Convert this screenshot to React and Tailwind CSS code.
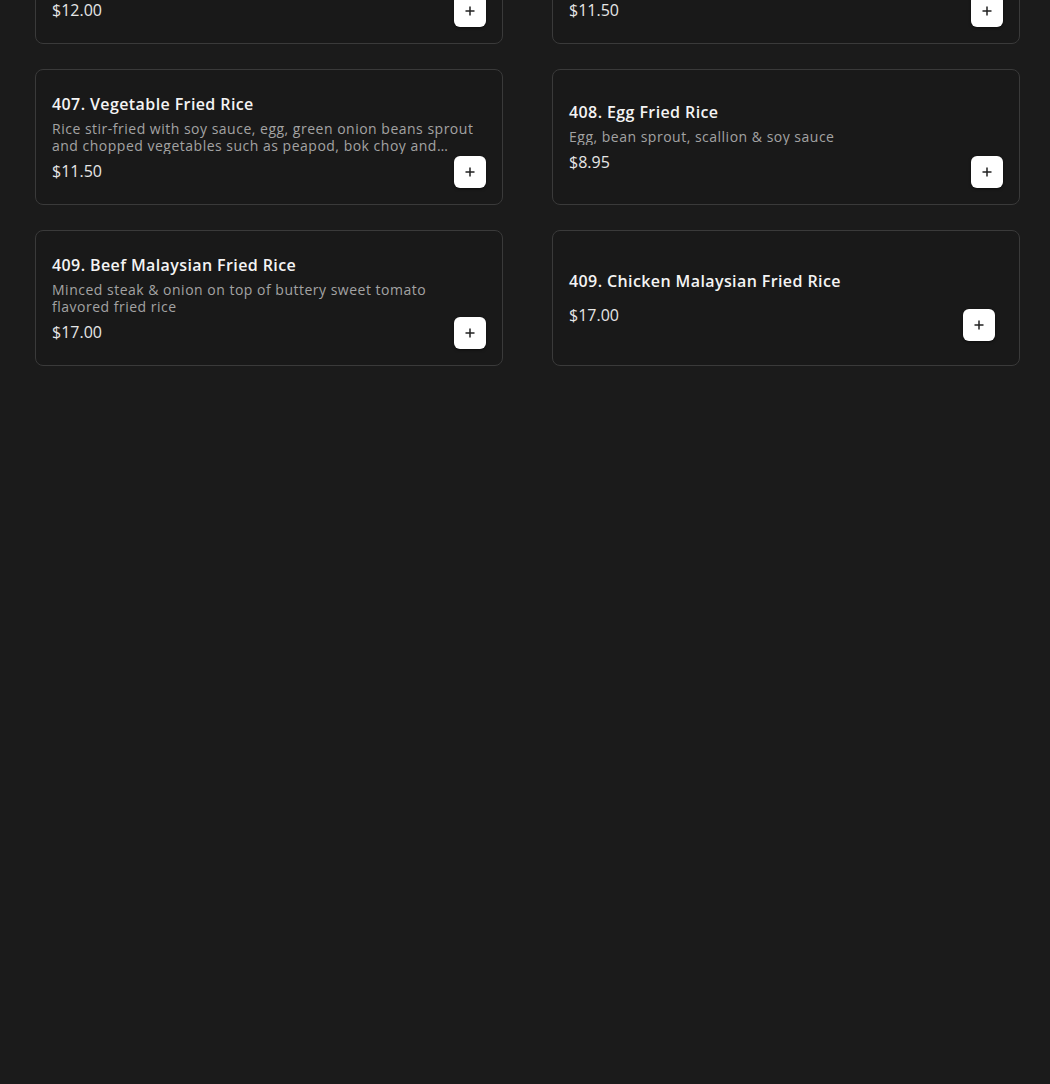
import React from 'react';

const ITEMS = [
  {
    id: 405,
    name: '405. Shrimp Fried Rice',
    desc: 'Rice stir-fried with shrimp, egg, green onion, bean sprout and soy sauce, finished with a touch of sesame oil',
    price: '$12.00',
  },
  {
    id: 406,
    name: '406. Chicken Fried Rice',
    desc: 'Rice stir-fried with chicken, egg, green onion, bean sprout and soy sauce, finished with a touch of sesame oil',
    price: '$11.50',
  },
  {
    id: 407,
    name: '407. Vegetable Fried Rice',
    desc: 'Rice stir-fried with soy sauce, egg, green onion beans sprout and chopped vegetables such as peapod, bok choy and carrots',
    price: '$11.50',
  },
  { id: 408, name: '408. Egg Fried Rice', desc: 'Egg, bean sprout, scallion & soy sauce', price: '$8.95' },
  { id: 409, name: '409. Beef Malaysian Fried Rice', desc: 'Minced steak & onion on top of buttery sweet tomato flavored fried rice', price: '$17.00' },
  { id: 410, name: '409. Chicken Malaysian Fried Rice', desc: '', price: '$17.00', inset: true },
];

function PlusButton({ inset }) {
  return (
    <button
      className={
        'absolute flex h-8 w-8 items-center justify-center rounded-md bg-white text-[#222] shadow-[0_1px_3px_rgba(0,0,0,0.5)] ' +
        (inset ? 'bottom-6 right-6' : 'bottom-4 right-4')
      }
    >
      <svg width="12" height="12" viewBox="0 0 12 12" fill="none" stroke="currentColor" strokeWidth="1.5">
        <path d="M6 1.5v9M1.5 6h9" />
      </svg>
    </button>
  );
}

function MenuCard({ item }) {
  return (
    <div className="relative flex h-[136px] flex-col justify-center rounded-lg border border-[#3a3a3a] bg-[#191919] p-4">
      <h3 className="text-[16px] font-semibold leading-6 tracking-[0.4px] text-[#f4f4f4]">{item.name}</h3>
      <p className="mt-[4px] line-clamp-2 min-h-[1px] pr-[10px] text-[14px] leading-[17px] tracking-[0.5px] text-[#a3a3a3]">
        {item.desc}
      </p>
      <div className="mt-[5px] text-[16px] leading-6 text-[#e6e6e6]">{item.price}</div>
      <PlusButton inset={item.inset} />
    </div>
  );
}

export default function App() {
  return (
    <div
      className="min-h-[1084px] overflow-hidden bg-[#1b1b1b] pl-[35px] pr-[30px]"
      style={{ fontFamily: '"Open Sans", "Noto Sans", sans-serif' }}
    >
      <div className="mt-[-92px] grid grid-cols-2 gap-x-[49px] gap-y-[25px]">
        {ITEMS.map(item => (
          <MenuCard key={item.id} item={item} />
        ))}
      </div>
    </div>
  );
}
